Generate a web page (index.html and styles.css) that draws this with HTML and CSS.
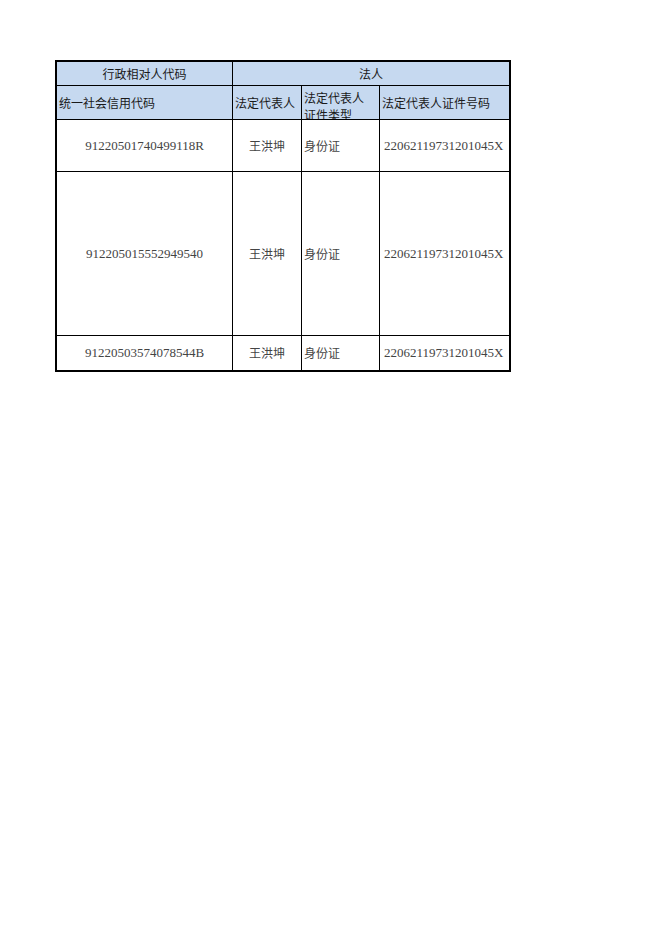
FILE: index.html
```html
<!DOCTYPE html>
<html lang="zh">
<head>
<meta charset="utf-8">
<title>法人信息</title>
<link rel="stylesheet" href="styles.css">
</head>
<body>
<div class="sheet">
  <div class="cell head center span1">行政相对人代码</div>
  <div class="cell head center span3">法人</div>

  <div class="cell head left">统一社会信用代码</div>
  <div class="cell head left">法定代表人</div>
  <div class="cell head top"><div class="wrap">法定代表人<br>证件类型</div></div>
  <div class="cell head left">法定代表人证件号码</div>

  <div class="cell data center num">91220501740499118R</div>
  <div class="cell data center">王洪坤</div>
  <div class="cell data left">身份证</div>
  <div class="cell data left num idn">22062119731201045X</div>

  <div class="cell data center num">912205015552949540</div>
  <div class="cell data center">王洪坤</div>
  <div class="cell data left">身份证</div>
  <div class="cell data left num idn">22062119731201045X</div>

  <div class="cell data center num">91220503574078544B</div>
  <div class="cell data center">王洪坤</div>
  <div class="cell data left">身份证</div>
  <div class="cell data left num idn">22062119731201045X</div>
</div>
</body>
</html>
```
FILE: styles.css
```css
html, body {
  margin: 0;
  padding: 0;
  background: #ffffff;
}

.sheet {
  margin: 60px 0 0 55px;
  width: 452px;
  display: grid;
  grid-template-columns: 175px 68px 77px 129px;
  grid-template-rows: 23px 33px 51px 163px 34px;
  gap: 1px;
  background: #000000;
  border: 2px solid #000000;
}

.cell {
  background: #ffffff;
  display: flex;
  align-items: center;
  overflow: hidden;
  white-space: nowrap;
}

.head {
  background: #c6d9f0;
  font-family: "Noto Sans CJK SC", "Noto Sans", sans-serif;
  font-size: 12px;
  color: #1a1a1a;
}

.span3 {
  grid-column: span 3;
}

.center {
  justify-content: center;
}

.left {
  justify-content: flex-start;
  padding-left: 2px;
}

.top {
  align-items: flex-start;
  padding-left: 2px;
}

.wrap {
  line-height: 17px;
  padding-top: 3px;
}

.data {
  font-family: "Liberation Serif", "Noto Sans CJK SC", serif;
  font-size: 12px;
  color: #444444;
}

.num {
  font-size: 13px;
}

.idn {
  padding-left: 4px;
}
```
